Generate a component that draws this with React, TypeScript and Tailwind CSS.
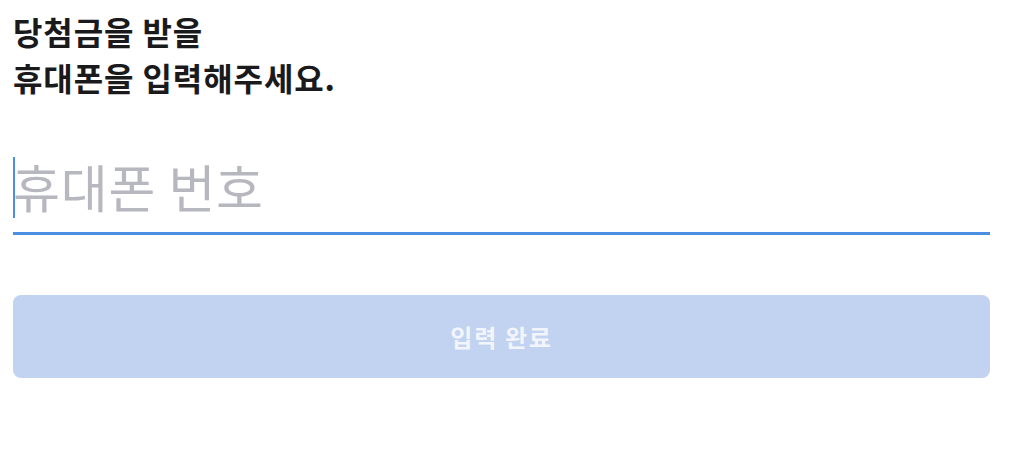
import React from "react";

export default function App() {
  return (
    <div
      className="w-[1015px] h-[461px] bg-white px-[13px] pt-[8px]"
      style={{ fontFamily: '"Noto Sans CJK KR", "Noto Sans", sans-serif' }}
    >
      <div className="w-[977px]">
        <h1 className="text-[32px] leading-[46px] tracking-[0.9px] font-bold text-[#1a1a1c]">
          당첨금을 받을
          <br />
          휴대폰을 입력해주세요.
        </h1>
        <div className="relative mt-[46px] border-b-[3px] border-[#4a8fe2]">
          <input
            className="w-full h-[86px] text-[51px] tracking-[0.8px] leading-[62px] outline-none placeholder:text-[#b7b7c0] bg-transparent pb-[6px]"
            placeholder="휴대폰 번호"
            readOnly
          />
          <div className="absolute left-0 top-[11px] w-[2px] h-[61px] bg-[#4a8fe2]" />
        </div>
        <button className="mt-[60px] w-full h-[83px] rounded-[8px] bg-[#c1d3f0] text-[#f2f5fb] text-[24px] tracking-[1.7px] font-bold">
          입력 완료
        </button>
      </div>
    </div>
  );
}
